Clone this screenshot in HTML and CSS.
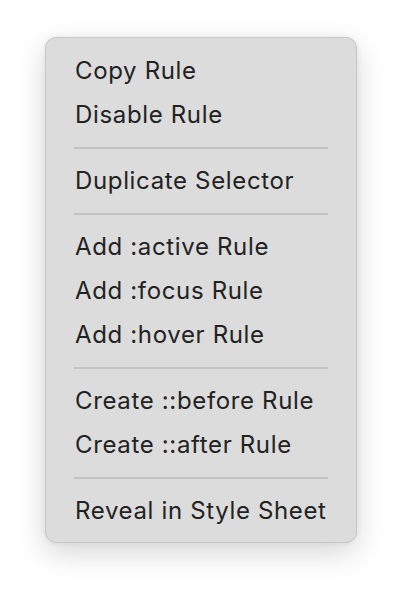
FILE: index.html
```html
<!DOCTYPE html>
<html>
<head>
<meta charset="utf-8">
<link rel="stylesheet" href="styles.css">
</head>
<body>
<div class="menu">
  <div class="item">Copy Rule</div>
  <div class="item">Disable Rule</div>
  <div class="sep"></div>
  <div class="item">Duplicate Selector</div>
  <div class="sep"></div>
  <div class="item">Add :active Rule</div>
  <div class="item">Add :focus Rule</div>
  <div class="item">Add :hover Rule</div>
  <div class="sep"></div>
  <div class="item">Create ::before Rule</div>
  <div class="item">Create ::after Rule</div>
  <div class="sep"></div>
  <div class="item">Reveal in Style Sheet</div>
</div>
</body>
</html>
```
FILE: styles.css
```css
html, body {
  margin: 0;
  padding: 0;
  background: #ffffff;
}
body {
  width: 402px;
  height: 596px;
  padding: 37px 0 0 45px;
  box-sizing: border-box;
  font-family: Inter, "Noto Sans", sans-serif;
}
.menu {
  width: 312px;
  box-sizing: border-box;
  background: #dcdcdc;
  border: 1px solid #c6c6c6;
  border-radius: 11px;
  padding: 11px 0 9px 0;
  box-shadow: 0 10px 30px rgba(0,0,0,0.16), 0 0 6px rgba(0,0,0,0.06);
}
.item {
  height: 44px;
  line-height: 44px;
  padding-left: 29px;
  font-size: 24px;
  letter-spacing: 0.65px;
  color: #222222;
  white-space: nowrap;
}
.sep {
  height: 22px;
  display: flex;
  align-items: center;
  padding: 0 28px 0 28px;
}
.sep::before {
  content: "";
  flex: 1;
  height: 2px;
  background: #c2c2c2;
}
```
